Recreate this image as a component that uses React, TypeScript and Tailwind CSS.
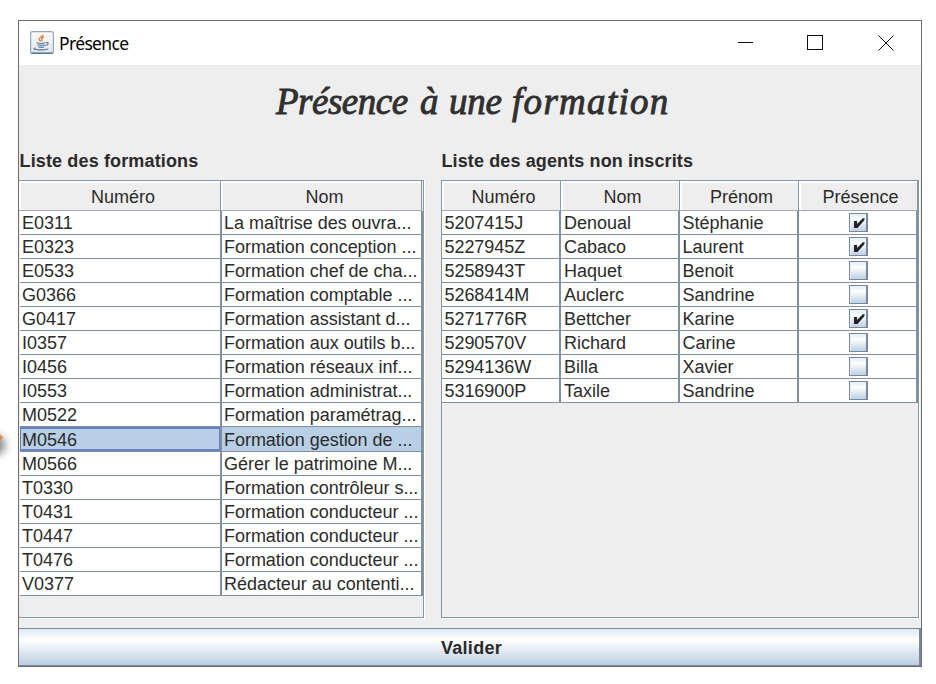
import React from "react";

const formations: [string, string][] = [
  ["E0311", "La maîtrise des ouvra..."],
  ["E0323", "Formation conception ..."],
  ["E0533", "Formation chef de cha..."],
  ["G0366", "Formation comptable ..."],
  ["G0417", "Formation assistant d..."],
  ["I0357", "Formation aux outils b..."],
  ["I0456", "Formation réseaux inf..."],
  ["I0553", "Formation administrat..."],
  ["M0522", "Formation paramétrag..."],
  ["M0546", "Formation gestion de ..."],
  ["M0566", "Gérer le patrimoine M..."],
  ["T0330", "Formation contrôleur s..."],
  ["T0431", "Formation conducteur ..."],
  ["T0447", "Formation conducteur ..."],
  ["T0476", "Formation conducteur ..."],
  ["V0377", "Rédacteur au contenti..."],
];

const agents: [string, string, string, boolean][] = [
  ["5207415J", "Denoual", "Stéphanie", true],
  ["5227945Z", "Cabaco", "Laurent", true],
  ["5258943T", "Haquet", "Benoit", false],
  ["5268414M", "Auclerc", "Sandrine", false],
  ["5271776R", "Bettcher", "Karine", true],
  ["5290570V", "Richard", "Carine", false],
  ["5294136W", "Billa", "Xavier", false],
  ["5316900P", "Taxile", "Sandrine", false],
];

function JavaIcon() {
  return (
    <svg width="24" height="23" viewBox="0 0 24 23" fill="none">
      <defs>
        <linearGradient id="java-bg" x1="0" y1="0" x2="0" y2="1">
          <stop offset="0" stopColor="#fafafa" />
          <stop offset="1" stopColor="#dfe4ea" />
        </linearGradient>
      </defs>
      <rect x="0.600" y="0.600" width="22.800" height="21.800" rx="2" fill="url(#java-bg)" stroke="#8fa2b8" strokeWidth="1.100" />
      <path d="M1.500 22.200H22.500" stroke="#4e6e90" strokeWidth="1.300" />
      <path d="M12.700 3.500c.7 2.200-3.800 2.800-3.600 4.700.1 1 1 1.400 1.600 2.200M14 6c-1.700.6-2.800 1.500-2.300 2.500.4.700.6 1.100 0 1.900" stroke="#e08a45" strokeWidth="1.500" />
      <path d="M6.500 11.800c2.500.8 6.500.8 9 0M7.500 13.800c2.300.8 5.300.8 7.400 0M8.300 15.800c2 .8 4.200.8 5.900 0M16 11.700c3.200-.7 2.800 2.500-.5 3M5.500 17.200c-2.800.6-1.500 1.700 5.500 1.700 4.500 0 7-.6 6.800-1.400" stroke="#54789b" strokeWidth="1.200" />
    </svg>
  );
}

function HeaderCell({ children, className }: { children: React.ReactNode; className: string }) {
  return (
    <div className={`flex items-center justify-center border-r border-b border-r-[#8795a5] border-b-[#a0abb7] pt-[2px] pl-[5px] shadow-[inset_2px_2px_0_#fff] ${className}`}>
      {children}
    </div>
  );
}

function CheckBox({ checked }: { checked: boolean }) {
  return (
    <span className="relative ml-[2px] block h-[19px] w-[19px] border border-r-2 border-[#7a8a99] bg-linear-to-b from-[#dfe9f3] via-white via-30% to-[#bccfe3] shadow-[inset_1px_1px_0_#e9f0f7]">
      {checked && (
        <svg className="absolute top-[3px] left-[3px]" width="13" height="13" viewBox="0 0 13 13">
          <path d="M1 4H4V7L9.500 1.500L11.500 1V3L4.500 11H1Z" fill="#222" />
        </svg>
      )}
    </span>
  );
}

const cell = "flex items-center border-r-2 border-b border-[#8190a0] whitespace-nowrap overflow-hidden";

export default function App() {
  return (
    <div className="relative h-[684px] w-[936px] overflow-hidden bg-white pt-5 pl-[18px] font-['Liberation_Sans',Arial,sans-serif] text-[18px] leading-6 text-[#2b2b2b]">
      <div className="absolute top-[435px] -left-[15px] h-5 w-5 rounded-full bg-black/50 blur-[4px]" />
      <div className="absolute top-[435px] -left-[3px] h-[5px] w-[5px] rotate-45 bg-[#f0813a]" />
      <div className="flex h-[647px] w-[904px] flex-col border border-[#6d6d6d] bg-[#eee]">
        <header className="flex h-[44px] shrink-0 items-center bg-white pl-[11px] text-black">
          <span className="-mt-[2px]"><JavaIcon /></span>
          <span className="ml-[5px] font-['Noto_Sans',sans-serif] text-[17.500px] tracking-[-0.650px]">Présence</span>
          <svg className="mt-px mr-[26px] ml-auto" width="158" height="18" viewBox="0 0 158 18" fill="none" stroke="#111">
            <path d="M1 7.500H16" />
            <rect x="70.500" y="0.500" width="15" height="14" />
            <path d="M141.500 0.500L156.500 15.500M156.500 0.500L141.500 15.500" />
          </svg>
        </header>
        <h1 className="flex h-[79px] shrink-0 items-center pb-[5px] pl-[257px] font-['Liberation_Serif',serif] text-[37px] whitespace-pre text-[#303030] italic [-webkit-text-stroke:0.900px_#303030]">
          <span className="w-[144px] tracking-[-0.500px]">{"Présence "}</span>
          <span className="w-[29px]">{"à "}</span>
          <span className="w-[63px] tracking-[-0.200px]">{"une "}</span>
          <span className="tracking-[1.300px]">formation</span>
        </h1>
        <main className="flex h-[463px] shrink-0">
          <section className="w-[405px]">
            <h2 className="h-9 pt-[5px] pl-[0.500px] font-bold tracking-[0.140px]">Liste des formations</h2>
            <div className="h-[438px] border border-l-0 border-[#8795a5] shadow-[1px_1px_0_#fff]">
              <div className="flex h-[30px] w-[404px]">
                <HeaderCell className="w-[202px] pl-[7px]">Numéro</HeaderCell>
                <HeaderCell className="w-[201px] pl-[7px]">Nom</HeaderCell>
              </div>
              {formations.map(([num, nom]) => {
                const selected = num === "M0546";
                return (
                  <div key={num} className={`flex w-[404px] border-l border-[#eee] ${selected ? "h-[25px] bg-[#b8cfe5]" : "h-6 bg-white"}`}>
                    <div className={`${cell} w-[202px] pt-px pl-[2px] ${selected ? "shadow-[inset_1px_2px_0_#6382bf,inset_-1px_-2px_0_#6382bf]" : ""}`}>{num}</div>
                    <div className={`${cell} w-[201px] pt-px pl-[2px] tracking-[-0.030px]`}>{nom}</div>
                  </div>
                );
              })}
            </div>
          </section>
          <section className="ml-[17px] w-[478px]">
            <h2 className="h-9 pt-[5px] pl-[0.500px] font-bold tracking-[0.120px]">Liste des agents non inscrits</h2>
            <div className="h-[438px] border border-[#8795a5] shadow-[1px_1px_0_#fff]">
              <div className="flex h-[30px]">
                <HeaderCell className="w-[119px]">Numéro</HeaderCell>
                <HeaderCell className="w-[119px]">Nom</HeaderCell>
                <HeaderCell className="w-[119px]">Prénom</HeaderCell>
                <HeaderCell className="w-[119px]">Présence</HeaderCell>
              </div>
              {agents.map(([num, nom, prenom, present]) => (
                <div key={num} className="flex h-6 bg-white">
                  <div className={`${cell} w-[119px] pt-px pl-[2.500px] tracking-[-0.060px]`}>{num}</div>
                  <div className={`${cell} w-[119px] pt-px pl-[3px]`}>{nom}</div>
                  <div className={`${cell} w-[119px] pt-px pl-[2.500px]`}>{prenom}</div>
                  <div className={`${cell} w-[119px] justify-center`}><CheckBox checked={present} /></div>
                </div>
              ))}
            </div>
          </section>
        </main>
        <button className="mt-auto h-[38px] shrink-0 border-t border-r-2 border-b border-[#7a8a99] bg-linear-to-b from-[#dfe9f4] via-white via-30% to-[#bccfe3] pt-px pl-[5px] font-bold tracking-[0.300px]">
          Valider
        </button>
      </div>
    </div>
  );
}
